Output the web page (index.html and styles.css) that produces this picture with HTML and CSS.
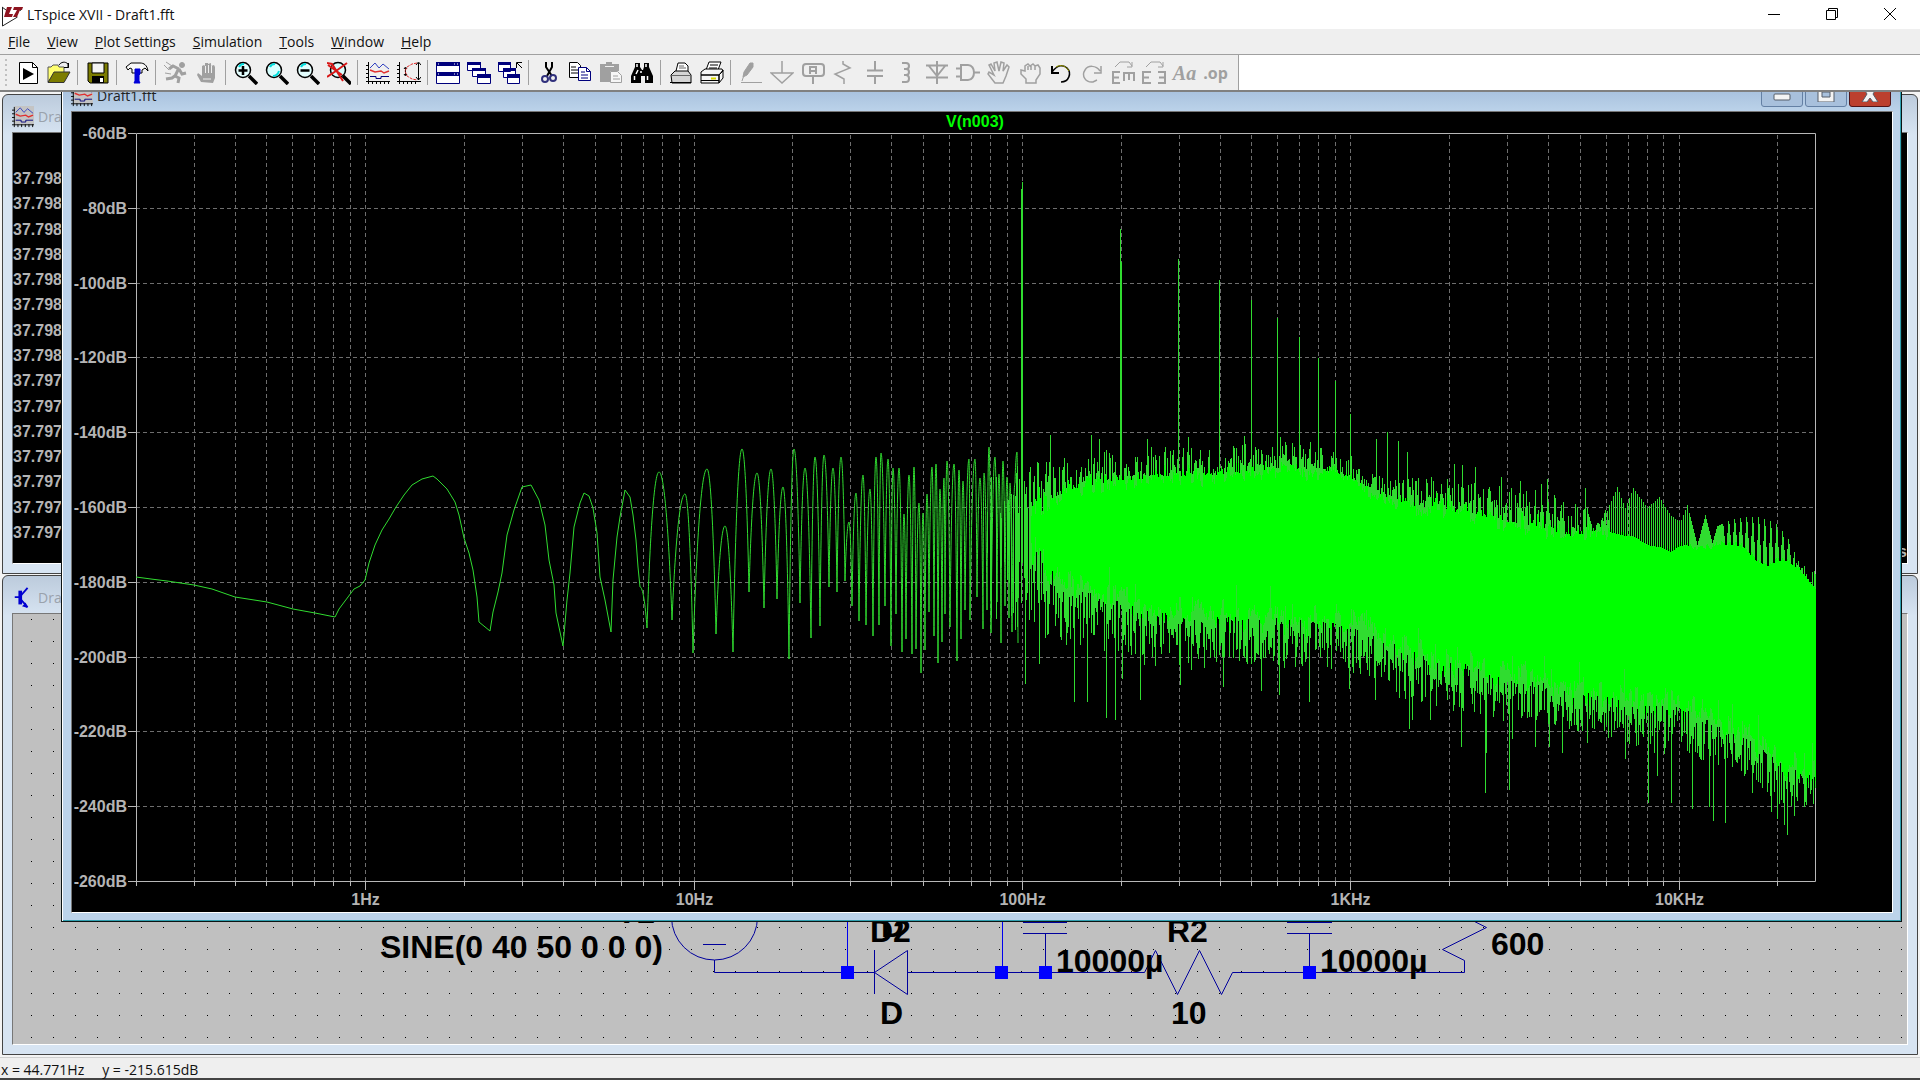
FILE: index.html
```html
<!DOCTYPE html>
<html lang="en">
<head>
    <meta charset="UTF-8">
    <meta name="viewport" content="width=device-width, initial-scale=1.0">
    <title>LTspice XVII - Draft1.fft</title>
    <link rel="stylesheet" href="styles.css">
</head>
<body>

    <!-- Main window title -->
    <header class="titlebar">
        <svg class="logo" viewBox="0 0 22 24">
            <path d="M1.500 4v19l15-9M19 8l2-4" fill="none" stroke="#222" stroke-width="1"/>
            <path d="M1 4l4 3" stroke="#222"/>
            <path d="M6 4h5l-3 7h4l-1 3H3zM13 4h9l-1 3h-2l-3 7h-4l4-7h-4z" fill="#8e1420"/>
        </svg>
        <span class="title">LTspice XVII - Draft1.fft</span>
        <div class="window-buttons">
            <button aria-label="Minimize"><svg viewBox="0 0 12 12"><path d="M0 6.500h12"/></svg></button>
            <button aria-label="Restore"><svg viewBox="0 0 12 12"><path d="M.5 2.500h9v9h-9zM2.500 2.500v-2h9v9h-2"/></svg></button>
            <button aria-label="Close"><svg viewBox="0 0 12 12"><path d="M0 0l12 12M12 0L0 12"/></svg></button>
        </div>
    </header>

    <nav class="menubar">
        <button><u>F</u>ile</button>
        <button><u>V</u>iew</button>
        <button><u>P</u>lot Settings</button>
        <button><u>S</u>imulation</button>
        <button><u>T</u>ools</button>
        <button><u>W</u>indow</button>
        <button><u>H</u>elp</button>
    </nav>

    <div class="toolbar-row">
        <div class="toolbar">
            <span class="grip"></span>
            <button aria-label="Run"><svg viewBox="0 0 24 24"><path d="M3.500 1.500h13l5 5v16h-18z" fill="#fff" stroke="#000"/><path d="M16.500 1.500v5h5" fill="none" stroke="#000"/><path d="M7 7v12l11-6z"/></svg></button>
            <button aria-label="Open"><svg viewBox="0 0 24 24"><path d="M1 21V6h3l2-2h5l1 2h5v6H8z" fill="#ffff70" stroke="#555"/><path d="M1 21.500L7 11h16l-6 10.500z" fill="#7c7c00" stroke="#333"/><path d="M12 4c2-3 6-4 9-1v4M17 6.500h4.500V2" fill="none" stroke="#000"/></svg></button>
            <span class="sep"></span>
            <button aria-label="Save"><svg viewBox="0 0 24 24"><path d="M2 2h20v20H4l-2-2z" fill="#7c7c00" stroke="#000"/><path d="M6 2h12v10H6z" fill="#f4f4f4" stroke="#000"/><path d="M6 15h12v7H6z"/><path d="M14 17h3v4h-3z" fill="#fff"/></svg></button>
            <span class="sep"></span>
            <button aria-label="Control panel"><svg viewBox="0 0 24 24"><path d="M1 6l5-4h9c4 0 7 2 8 8l-3-3-3 2v3H7V8L5 7l-2 2z" fill="#f8f8f8" stroke="#000"/><path d="M10 8h5v5l-1 1v6l1 2H9l1-2v-6z" fill="#0000d8" stroke="#0000d8"/></svg></button>
            <span class="sep"></span>
            <button aria-label="Start simulation"><svg viewBox="0 0 24 24" class="dim"><circle cx="18" cy="4" r="2.500" fill="#a0a0a0"/><path d="M15 7l-4 8 4 2-1 5M12 14l-4 3-6 1M15 8l-6-3-4 3M15 8l3 5 4-1" stroke-width="3"/><path d="M2 1l6 4M0 4l5 5M1 12l6 1"/></svg></button>
            <button aria-label="Halt"><svg viewBox="0 0 24 24"><path d="M6 21l-4-7 1-2 4 3V5l2-1 1 1V2h3v1l3-1v3l3-1 1 2v11l-2 5z" fill="#a0a0a0"/><path d="M10.500 5v7M13.500 4v8M16.500 5v7M8 18h8" stroke="#efefef" fill="none"/></svg></button>
            <span class="sep"></span>
            <button aria-label="Zoom in"><svg viewBox="0 0 24 24"><circle cx="9" cy="9" r="7.500" fill="#e4ffff" stroke="#000" stroke-width="1.500"/><path d="M5 6c1-2 3-3 5-3" stroke="#0dd" fill="none" stroke-width="2"/><path d="M9 5v9M4.500 9.500h9" stroke="#000" stroke-width="2.500"/><path d="M15 15l8 8" stroke="#000" stroke-width="3.500"/></svg></button>
            <button aria-label="Pan"><svg viewBox="0 0 24 24"><circle cx="9" cy="9" r="7.500" fill="#d8ffff" stroke="#000" stroke-width="1.500"/><path d="M5 6c1-2 3-3 5-3M8 15c3 0 5-2 6-5" stroke="#0dd" fill="none" stroke-width="2"/><path d="M15 15l8 8" stroke="#000" stroke-width="3.500"/></svg></button>
            <button aria-label="Zoom out"><svg viewBox="0 0 24 24"><circle cx="9" cy="9" r="7.500" fill="#e4ffff" stroke="#000" stroke-width="1.500"/><path d="M5 6c1-2 3-3 5-3" stroke="#0dd" fill="none" stroke-width="2"/><path d="M4.500 9.500h9" stroke="#000" stroke-width="2.500"/><path d="M15 15l8 8" stroke="#000" stroke-width="3.500"/></svg></button>
            <button aria-label="Zoom to fit"><svg viewBox="0 0 24 24"><circle cx="11" cy="9" r="7.500" fill="#d8ffff" stroke="#000" stroke-width="1.500"/><path d="M16 15l8 8" stroke="#000" stroke-width="3.500"/><path d="M0 2l5 1 11 17M20 2L9 10 0 16M1 4l14 10" stroke="#d81818" stroke-width="2" fill="none"/></svg></button>
            <span class="sep"></span>
            <button aria-label="Autorange"><svg viewBox="0 0 24 24"><g id="chart-icon" fill="none" stroke="#000"><path d="M2.500 1v22M0 20.500h24M0 4.500h3M0 8.500h3M0 12.500h3M0 16.500h3M6.500 20v3M10.500 20v3M14.500 20v3M18.500 20v3M22.500 20v3"/><path d="M4 7l5-5 4 5 4-4 6 5" stroke="#3040c0"/><path d="M4 9l5 2 6-1 3 2 5-2" stroke="#e03030" stroke-width="1.500"/><path d="M4 15.500h6v2h5v-2h8" stroke="#00007c"/></g></svg></button>
            <button aria-label="Plot limits"><svg viewBox="0 0 24 24"><path d="M2.500 1v22M0 20.500h24M0 4.500h3M0 8.500h3M0 12.500h3M0 16.500h3M6.500 20v3M10.500 20v3M14.500 20v3M18.500 20v3M21.500 2v17M19 4l2.500-3L24 4M19 16l2.500 3 2.500-3M8.500 7v7M7 8l1.500-2L10 8M7 13l1.500 2 1.500-2" fill="none" stroke="#000"/><path d="M20 2l-5 1-5 3-2 4 2 5 5 3 5 1" fill="none" stroke="#e03030" stroke-dasharray="3 1"/></svg></button>
            <span class="sep"></span>
            <button aria-label="Tile"><svg viewBox="0 0 24 24"><path d="M.5 1.500h23v21H.5z" fill="#fff" stroke="#00007c"/><path d="M0 1h24v4H0zM0 11h24v4H0z" fill="#00007c"/><path d="M18 3h1M21 3h1M2 3h1M18 13h1M21 13h1M2 13h1" stroke="#fff"/></svg></button>
            <button aria-label="Cascade"><svg viewBox="0 0 24 24"><g fill="#fff" stroke="#00007c"><path d="M.5 1.500h13v8H.5zM5.500 7.500h13v8h-13zM10.500 14.500h13v8h-13z"/></g><path d="M0 1h14v3H0zM5 7h14v3H5zM10 13h14v4H10z" fill="#00007c"/></svg></button>
            <button aria-label="Close all"><svg viewBox="0 0 24 24"><g fill="#fff" stroke="#00007c"><path d="M.5 1.500h12v9H.5zM5.500 8.500h12v8h-12zM9.500 14.500h12v8h-12z"/></g><path d="M0 1h13v3H0zM5 7h13v3H5zM9 13h13v4H9z" fill="#00007c"/><path d="M24 7l-5-5M18.500 7V1.500H24" stroke="#000" fill="none"/></svg></button>
            <span class="sep"></span>
            <button aria-label="Cut"><svg viewBox="0 0 24 24"><path d="M9 1v5l6 9M15 1v5l-5 9" stroke="#000" stroke-width="2" fill="none"/><circle cx="8" cy="18" r="3" fill="none" stroke="#30307c" stroke-width="2"/><circle cx="16" cy="17" r="3" fill="none" stroke="#30307c" stroke-width="2"/></svg></button>
            <button aria-label="Copy"><svg viewBox="0 0 24 24"><path d="M1.500 1.500h8l3 3v12h-11z" fill="#fff" stroke="#000"/><path d="M3 6h5M3 9h7M3 12h7" stroke="#000"/><path d="M10.500 6.500h8l4 4v9h-12z" fill="#fff" stroke="#00007c"/><path d="M18.500 6.500v4h4M13 11h4M13 14h7M13 17h7" stroke="#00007c" fill="none"/></svg></button>
            <button aria-label="Paste"><svg viewBox="0 0 24 24"><path d="M1 3h6V1h6v2h7v7h-9v11H1z" fill="#a0a0a0"/><path d="M11.500 10.500h7l4 4v7h-11z" fill="#f6f6f6" stroke="#a0a0a0"/><path d="M14 15h5M14 18h7" stroke="#a0a0a0"/><path d="M6 5.500h9" stroke="#efefef"/></svg></button>
            <button aria-label="Find"><svg viewBox="0 0 24 24"><path d="M5 2h5v4l2 3h1l1-3V2h5v4l4 9v7h-8v-7h-4v7H1v-7l4-9z"/><path d="M7 3v3M16 3v3M4.500 15v4M17.500 15v4M8 9l-2 4M11 10v2" stroke="#fff" stroke-width="1.500"/></svg></button>
            <span class="sep"></span>
            <button aria-label="Print setup"><svg viewBox="0 0 24 24"><path d="M7 10l2-8h7l3 3v5" fill="#fff" stroke="#000"/><path d="M2 14l4-4h13l3 4v8H3z" fill="#d4d4d4" stroke="#000"/><path d="M3 14.500h18M10 5h5M10 7h7" stroke="#666"/><path d="M1 21.500h21" stroke="#000"/></svg></button>
            <button aria-label="Print"><svg viewBox="0 0 24 24"><path d="M6 9l3-8h12l-3 8" fill="#fff" stroke="#000"/><path d="M10 4h8M9 7h8" stroke="#000"/><path d="M1 11l4-3h17l1 2-4 4H1zM1 14h18v8H1zM19 14l4-5v8l-4 5z" fill="#f6f6f6" stroke="#000"/><path d="M11 17.500h5" stroke="#d8d800" stroke-width="2"/><path d="M1 19.500h18" stroke="#000"/></svg></button>
            <span class="sep"></span>
            <button aria-label="Wire"><svg viewBox="0 0 24 24" class="dim"><path d="M4 16l1-5 6-9h3v4L8 14z" fill="#a0a0a0"/><path d="M2 21.500h21M3 20l2-6"/></svg></button>
            <button aria-label="Ground"><svg viewBox="0 0 24 24" class="dim"><path d="M12 0v12M1 12h22L12 22z" stroke-width="1.500"/></svg></button>
            <button aria-label="Label net"><svg viewBox="0 0 24 24" class="dim"><rect x="2" y="3" width="21" height="12" rx="3" stroke-width="2"/><path d="M12 15v8M9 13V6h6v7M9 10h6" stroke-width="2"/></svg></button>
            <button aria-label="Resistor"><svg viewBox="0 0 24 24" class="dim"><path d="M11 0v3l7 4-15 6 9 5v5" stroke-width="1.500"/></svg></button>
            <button aria-label="Capacitor"><svg viewBox="0 0 24 24" class="dim"><path d="M12 0v9M12 15v8M4 9.500h16M4 15h16" stroke-width="2"/></svg></button>
            <button aria-label="Inductor"><svg viewBox="0 0 24 24" class="dim"><path d="M8 2h4c4 0 4 6 0 6h-2 2c4 0 4 6 0 6h-2 2c4 0 4 7 0 7H8" stroke-width="2"/></svg></button>
            <button aria-label="Diode"><svg viewBox="0 0 24 24" class="dim"><path d="M12 0v23M1 4.500h22M4 5l8 10 8-10M1 16.500h22" stroke-width="2"/></svg></button>
            <button aria-label="Component"><svg viewBox="0 0 24 24" class="dim"><path d="M5 4v15h7c4 0 6-4 6-7.500S16 4 12 4zM0 7.500h5M0 15.500h5M18 11.500h6" stroke-width="2"/></svg></button>
            <button aria-label="Move"><svg viewBox="0 0 24 24" class="dim"><path d="M8 22l-7-9 1-2 5 3L2 4l2-1 4 7-1-8 3-1 2 9 2-9 3 1-1 8 4-6 2 2-3 9-3 7z" stroke-width="1.500"/></svg></button>
            <button aria-label="Drag"><svg viewBox="0 0 24 24" class="dim"><path d="M8 22v-4l-5-5V9l4 1V5l3-2 2 2 3-2 2 2 3-1 2 3v6l-4 6v3zM10 5v4M13 5v4M17 5v4" stroke-width="1.500"/></svg></button>
            <button aria-label="Undo"><svg viewBox="0 0 24 24"><path d="M3 11c5-7 11-8 15-4 5 5 2 14-6 14" fill="none" stroke="#000" stroke-width="1.500"/><path d="M7 6c5-3 10-1 13 4" fill="none" stroke="#a0a000"/><path d="M3 5v7h7" stroke="#000" stroke-width="2" fill="none"/></svg></button>
            <button aria-label="Redo"><svg viewBox="0 0 24 24" class="dim"><path d="M20 10C16 4 8 4 5 9c-4 6 1 13 8 12l4-2M21 5v7h-7" stroke-width="1.500"/></svg></button>
            <button aria-label="Rotate"><svg viewBox="0 0 24 24" class="dim"><path d="M9 11H2v11h7M2 16.500h6M12 12h12M13 12v8M18 12v7M23 12v8" stroke-width="2"/><path d="M4 6l5-5h9l3 4M21 1v5h-5"/></svg></button>
            <button aria-label="Mirror"><svg viewBox="0 0 24 24" class="dim"><path d="M9 11H1v11h8M1 16.500h6M16 11h7v11h-7M23 16.500h-6" stroke-width="2"/><path d="M4 6l5-5h9l3 4M21 1v5h-5"/></svg></button>
            <button class="text-tool serif">Aa</button>
            <button class="text-tool">.op</button>
        </div>
    </div>

    <main class="desktop">

        <!-- Waveform window, behind -->
        <section class="child wave">
            <div class="child-title">
                <svg viewBox="0 0 24 24"><rect x="3" width="21" height="20" fill="#c4c4c4"/><use href="#chart-icon"/></svg>
                <span>Draft1</span>
            </div>
            <ul class="child-body readings" id="readings"></ul>
            <span class="unit">s</span>
        </section>

        <!-- Schematic window, behind -->
        <section class="child schematic">
            <div class="child-title">
                <svg viewBox="0 0 24 24"><path d="M9 4v15" fill="none" stroke="#0000d0" stroke-width="4"/><path d="M3 11h7M10 9l7-8M10 14l7 8" fill="none" stroke="#0000d0" stroke-width="2"/><path d="M17 23l-6-2 4-4z" fill="#0000d0"/></svg>
                <span>Draft1</span>
            </div>
            <div class="child-body">
                <svg class="circuit" viewBox="13 614 1894 430" preserveAspectRatio="xMinYMax slice">
                    <defs>
                        <pattern id="dots" x="31" y="619" width="22" height="22" patternUnits="userSpaceOnUse"><rect width="1" height="1"/></pattern>
                    </defs>
                    <rect x="13" y="614" width="1894" height="430" fill="url(#dots)"/>
                    <g class="wires">
                        <circle cx="714.500" cy="917" r="43"/>
                        <path d="M703 944.500h23M714.500 960v12.500h160M874.500 950v44M874.500 972.500l33-22v44zM907.500 972.500h237l11-22 22 44 22-44 22 44 11-22h232v-12l-22-11 44-22-12-6"/>
                        <path d="M1023 933.500h44M1023 922.500h44M1045.500 933v39M1287 933.500h45M1287 922.500h45M1309.500 933v39"/>
                        <path class="bright" d="M847.500 900v72M1002.500 900v72"/>
                    </g>
                    <path class="nodes" d="M841 966h13v13h-13zM995 966h13v13h-13zM1039 966h13v13h-13zM1303 966h13v13h-13z"/>
                    <g class="values">
                        <text x="616" y="923">V2</text>
                        <text x="380" y="958">SINE(0 40 50 0 0 0)</text>
                        <text x="870" y="942">D2</text>
                        <text x="881" y="937">D</text>
                        <text x="880" y="1024">D</text>
                        <text x="1056" y="972">10000µ</text>
                        <text x="1167" y="942">R2</text>
                        <text x="1171" y="1024">10</text>
                        <text x="1320" y="972">10000µ</text>
                        <text x="1491" y="955">600</text>
                    </g>
                </svg>
            </div>
        </section>

        <!-- FFT window -->
        <section class="child fft">
            <div class="child-title">
                <svg viewBox="0 0 24 24"><rect x="3" width="21" height="20" fill="#c4c4c4"/><use href="#chart-icon"/></svg>
                <span>Draft1.fft</span>
                <div class="caption-buttons">
                    <button aria-label="Minimize plot"><svg viewBox="0 0 20 16"><rect x="2" y="8" width="16" height="6" rx="1"/></svg></button>
                    <button aria-label="Maximize plot"><svg viewBox="0 0 20 16"><path fill-rule="evenodd" d="M2 1h16v15H2zM6 6h8v5H6z"/></svg></button>
                    <button class="close" aria-label="Close plot"><svg viewBox="0 0 20 16"><path d="M2 0h5l3 4 3-4h5l-5 8 5 8h-5l-3-4-3 4H2l5-8z"/></svg></button>
                </div>
            </div>
            <div class="child-body">
                <svg class="plot" id="plot" viewBox="72 112 1820 800">
                    <g id="grid"></g>
                    <g id="trace"></g>
                    <text class="trace-name" x="975" y="127" text-anchor="middle">V(n003)</text>
                </svg>
            </div>
        </section>
    </main>

    <footer class="statusbar">
        <span>x = 44.771Hz</span>
        <span>y = -215.615dB</span>
    </footer>

    <script src="plot.js"></script>
</body>
</html>
```

FILE: styles.css
```css
/* General */
* {
    box-sizing: border-box;
}

body {
    margin: 0;
    height: 100vh;
    display: flex;
    flex-direction: column;
    overflow: hidden;
    background: #fff;
    color: #111;
    font-family: 'Open Sans', 'Noto Sans', sans-serif;
    font-size: 14px;
}

button {
    border: none;
    background: none;
    padding: 0;
    margin: 0;
    font: inherit;
    color: inherit;
}

/* Title bar */
.titlebar {
    display: flex;
    align-items: center;
    height: 29px;
    padding-left: 1px;
}

.logo {
    width: 22px;
    height: 24px;
    margin-right: 4px;
}

.window-buttons {
    display: flex;
    margin-left: auto;
    margin-right: 1px;
}

.window-buttons button {
    width: 58px;
    height: 28px;
}

.window-buttons svg {
    width: 12px;
    height: 12px;
    fill: none;
    stroke: #000;
}

/* Menu */
.menubar {
    display: flex;
    gap: 17px;
    height: 26px;
    padding: 0 8px;
    background: #efefef;
    border-bottom: 1px solid #a0a0a0;
}

/* Toolbar */
.toolbar-row {
    height: 37px;
    border-bottom: 2px solid #808080;
}

.toolbar {
    display: flex;
    align-items: center;
    width: 1239px;
    height: 35px;
    background: #efefef;
    border-right: 1px solid #a0a0a0;
}

.grip {
    width: 2px;
    height: 28px;
    margin: 0 5px;
    background: repeating-linear-gradient(#c0c0c0 0 2px, #efefef 2px 5px);
}

.toolbar button {
    flex: none;
    width: 31px;
    height: 30px;
    line-height: 0;
}

.toolbar svg {
    width: 24px;
    height: 24px;
}

.toolbar .dim {
    fill: none;
    stroke: #a0a0a0;
    stroke-width: 1;
}

.sep {
    flex: none;
    width: 1px;
    height: 25px;
    margin: 0 4px 0 3px;
    background: #a0a0a0;
}

.toolbar .text-tool {
    line-height: 24px;
    font-size: 16px;
    font-weight: bold;
    color: #a0a0a0;
}

.toolbar .serif {
    font-family: 'Liberation Serif', serif;
    font-style: italic;
    font-size: 20px;
}

/* MDI area */
.desktop {
    position: relative;
    flex: 1;
    overflow: hidden;
    background: #f4f4f4;
}

.child {
    position: absolute;
    display: flex;
    flex-direction: column;
    padding: 0 9px 9px;
    background: #d7e4f2;
    border: 1px solid #444;
    border-radius: 6px 6px 0 0;
}

.child-title {
    display: flex;
    align-items: center;
    gap: 4px;
    height: 37px;
    padding-top: 6px;
    color: #9aa2ac;
}

.child-title > svg {
    width: 22px;
    height: 22px;
}

.child-body {
    flex: 1;
    min-height: 0;
    margin: 0;
    border: 1px solid #fff;
    border-top-color: #777;
    border-left-color: #777;
}

.wave {
    top: 2px;
    left: 2px;
    right: 2px;
    height: 480px;
    background: linear-gradient(#bccbdc, #d7e4f2 40px);
}

.schematic {
    top: 483px;
    left: 2px;
    right: 2px;
    bottom: 2px;
    background: linear-gradient(#bccbdc, #d7e4f2 40px);
}

.schematic .child-body {
    background: #c0c0c0;
}

.readings {
    display: flex;
    flex-direction: column;
    justify-content: space-between;
    padding: 33px 0 18px;
    list-style: none;
    background: #000;
    color: #b4b4b4;
    font: bold 16px/25px 'Liberation Sans', Arial, sans-serif;
}

.unit {
    position: absolute;
    right: 10px;
    bottom: 12px;
    color: #b4b4b4;
    font: bold 16px 'Liberation Sans', Arial, sans-serif;
}

.fft {
    top: -13px;
    left: 61px;
    right: 18px;
    height: 843px;
    padding: 0 8px 8px 9px;
    background: linear-gradient(#9fb9d8, #bcd3ea 32px);
    border-color: #0c1414;
    box-shadow: inset 1px 0 #fff, inset -1px -1px #30a0b0;
    border-radius: 0;
}

.fft .child-title {
    height: 31px;
    padding-top: 0;
    color: #222;
}

.fft .child-body {
    background: #000;
}

.caption-buttons {
    display: flex;
    gap: 2px;
    margin-left: auto;
    margin-right: 2px;
}

.caption-buttons button {
    width: 42px;
    height: 23px;
    background: #a8c0dc;
    border: 1px solid #6480a4;
    border-radius: 3px;
}

.caption-buttons .close {
    background: #bc402e;
    border-color: #501418;
}

.caption-buttons svg {
    display: block;
    width: 20px;
    height: 16px;
    margin: 0 auto 4px;
    fill: #f4f4f4;
    stroke: #555c68;
}

/* Schematic drawing */
.circuit,
.plot {
    display: block;
    width: 100%;
    height: 100%;
}

.wires {
    fill: none;
    stroke: #00009c;
}

.bright {
    stroke: #0000ee;
}

.nodes {
    fill: #0000ff;
}

.values {
    font: bold 32px 'Liberation Sans', Arial, sans-serif;
}

/* Plot */
.plot text {
    font: bold 16px 'Liberation Sans', Arial, sans-serif;
    fill: #b4b4b4;
}

.plot .trace-name {
    fill: #00ff00;
}

.plot path {
    fill: none;
    stroke-width: 1;
}

.axis {
    stroke: #b8b8b8;
}

.dashes {
    stroke: #6e6e6e;
    stroke-dasharray: 4 3;
}

.thin {
    stroke: #30dc30;
}

.solid {
    stroke: #00ff00;
}

/* Status bar */
.statusbar {
    display: flex;
    gap: 18px;
    height: 23px;
    padding: 2px 1px 0;
    line-height: 20px;
    background: linear-gradient(#444, #444) bottom / 100% 2px no-repeat #efefef;
    border-top: 1px solid #d0d0d0;
}
```

FILE: plot.js
```javascript
// Axis geometry
const left = 136, right = 1815, top0 = 133, bottom0 = 881;
const hz = f => Math.round(365.3 + 328.3 * Math.log10(f)) + 0.5;
const db = v => Math.round(top0 + (-60 - v) * 3.74) + 0.5;

// Peaks and valleys of the slow part of the curve
const slow = [[136,577],[151,579],[167,581],[194,585],[212,589],[235,597],[267,602],[293,609],[315,613],[335,617],
    [339,609],[345,601],[354,589],[360,586],[365,580],[369,563],[375,545],[382,530],[389,519],[396,507],[404,495],
    [412,485],[422,479],[433,476],[437,479],[447,489],[455,502],[459,515],[464,538],[469,553],[473,570],[477,597],
    [479,622],[490,631],[493,612],[498,592],[502,573],[507,535],[514,510],[522,487],[531,485],[539,500],[545,525],
    [549,560],[554,585],[556,613],[563,646],[567,600],[570,573],[574,527],[580,503],[584,493],[589,496],[593,508],
    [597,533],[600,577],[605,600],[611,632],[613,580],[617,537],[620,517],[625,490],[630,497],[633,515],[636,540],
    [638,567],[640,587]];

const swings = [[647,628],[659,472],[672,620],[685,494],[693,653],[707,469],[716,634],[725,526],[733,652],[742,449],
    [749,592],[757,473],[764,608],[771,469],[777,599],[783,487],[789,659],[794,449],[800,603],[805,468],[811,638],
    [815,457],[820,626],[824,455],[829,587],[833,468],[837,592],[841,457],[845,581],[849,522],[852,606],[856,493],
    [859,621],[863,475],[866,625],[870,489],[873,636],[876,457],[879,625],[881,453],[885,606],[888,459],[891,646],
    [893,468],[896,614],[899,468],[902,652],[904,514],[906,639],[909,475],[912,654],[914,467],[916,649],[919,503],
    [921,673],[923,513],[925,650],[927,494],[929,612],[932,467],[934,636],[936,464],[938,663],[940,489],[942,642],
    [944,478],[945,614],[947,461],[950,627],[954,464],[957,661],[959,470],[961,639],[963,481],[965,610],[969,459],
    [970,620],[975,459],[977,597],[980,478],[983,629],[984,473],[987,610],[989,447],[991,633],[995,457],[997,602],
    [999,474],[1001,643],[1003,461],[1005,606],[1007,477],[1009,618],[1010,483],[1012,632],[1015,483],[1017,452],
    [1018,643]];

// Envelopes of the dense part: [x, tip top, solid top, solid bottom, tip bottom]
const bands = [[985,475,520,550,615],[1030,462,505,575,640],[1060,458,490,590,646],[1100,450,480,604,650],
    [1150,446,474,618,667],[1200,448,472,623,671],[1250,443,468,626,664],[1283,441,464,626,668],[1333,450,468,630,671],
    [1350,455,475,632,678],[1370,473,485,642,685],[1400,480,500,654,700],[1440,474,506,670,712],[1473,482,510,672,712],
    [1506,487,518,686,723],[1540,487,523,690,723],[1573,502,533,699,733],[1600,512,525,703,737],[1609,505,528,706,740],
    [1617,487,530,706,742],[1625,508,532,707,745],[1633,488,532,707,748],[1647,508,541,709,752],[1659,497,543,711,758],
    [1670,515,548,714,767],[1680,522,542,716,764],[1687,505,541,719,762],[1697,545,546,722,762],[1705,515,544,726,763],
    [1712,543,544,729,765],[1717,526,541,732,766],[1730,520,541,740,772],[1743,517,543,744,775],[1757,517,558,752,785],
    [1768,520,562,760,798],[1777,525,557,768,805],[1787,537,557,776,808],[1800,565,567,780,812],[1815,568,585,784,810]];

const up = {1021:189,1022:182,1050:435,1091:435,1099:439,1120:229,1121:262,1147:439,1178:259,1188:437,1219:280,1244:436,
    1251:300,1277:318,1280:437,1299:337,1310:442,1318:358,1335:381,1350:414,1376:439,1387:432,1398:441,1407:452,
    1454:464,1462:465,1475:467,1501:477,1520:481,1541:484,1547:479,1585:488};

const down = {1025:684,1039:664,1074:702,1087:702,1106:718,1115:720,1122:679,1140:700,1180:685,1223:687,1261:691,
    1279:695,1309:702,1349:689,1375:700,1409:729,1412:720,1430:720,1461:747,1485:793,1486:753,1509:790,1512:739,
    1535:747,1549:747,1562:753,1587:743,1625:759,1648:803,1657:776,1671:803,1692:809,1709:807,1713:821,1725:823,
    1752:793,1771:812,1777:819,1784:825,1787:835,1794:816};

let seed = 11;
function rand() {
    seed = (seed * 16807) % 2147483647;
    return seed / 2147483647;
}

function band(x) {
    let i = 1;
    while (i < bands.length - 1 && bands[i][0] < x) i++;
    const a = bands[i - 1], b = bands[i];
    const t = (x - a[0]) / (b[0] - a[0]);
    return a.map((v, k) => v + (b[k] - v) * t);
}

function drawGrid() {
    let dashes = '', axis = `M${left}.5 ${top0}.5H${right}.5V${bottom0}.5H${left}.5Z`, labels = '';
    for (let v = -60; v >= -260; v -= 20) {
        const y = db(v);
        axis += `M${left - 8} ${y}h8`;
        if (v < -60 && v > -260) dashes += `M${left} ${y}H${right}`;
        labels += `<text x="127" y="${y + 5.5}" text-anchor="end">${v}dB</text>`;
    }
    for (let d = -1; d < 5; d++) {
        for (let n = 1; n < 10; n++) {
            const f = n * 10 ** d;
            if (f < 0.19 || f > 25000) continue;
            const x = hz(f);
            if (f > 0.25) dashes += `M${x} ${top0 + 2}V${bottom0}`;
            axis += `M${x} ${bottom0}v${n === 1 ? 9 : 5}`;
        }
    }
    ['1Hz', '10Hz', '100Hz', '1KHz', '10KHz'].forEach((t, i) => {
        labels += `<text x="${hz(10 ** i)}" y="905" text-anchor="middle">${t}</text>`;
    });
    document.getElementById('grid').innerHTML =
        `<path class="dashes" d="${dashes}"/><path class="axis" d="${axis}"/>${labels}`;
}

function drawTrace() {
    let line = 'M' + slow.map(p => p.join(' ')).join('L');
    let [px, py] = slow[slow.length - 1];
    // Round at the peaks, sharp at the valleys
    swings.forEach(([x, y]) => {
        const dx = x - px, dy = y - py;
        if (dy < 0) line += `C${px + dx * 0.25} ${py + dy * 0.6} ${px + dx * 0.6} ${y} ${x} ${y}`;
        else line += `C${px + dx * 0.4} ${py} ${px + dx * 0.75} ${py + dy * 0.4} ${x} ${y}`;
        px = x;
        py = y;
    });

    let tips = '', solid = '', wobble = 0, dip = 0;
    for (let x = 985; x <= right; x++) {
        const [, tipTop, solidTop, solidBottom, tipBottom] = band(x);
        const noisy = x < 1608;
        if (x % 3 === 0) {
            wobble = rand();
            dip = rand();
        }
        let reach = rand() ** 1.5;
        if (x > 1608 && x < 1690) reach = x % 2;
        else if (x >= 1690 && x < 1722) reach = 1;
        else if (x >= 1722 && x < 1795) reach = [1, 0.85, 0.4, 0, 0, 0.5][x % 6];
        const fade = x < 1060 ? rand() * (1060 - x) * 0.7 : 0;
        const a = up[x] || solidTop + 4 - (solidTop - tipTop + 4) * reach;
        const b = down[x] || solidBottom - 8 + (tipBottom - solidBottom + 8) * rand() ** 1.3;
        if (x > 1060 || rand() > (1060 - x) / 110 || up[x] || down[x]) tips += `M${x}.5 ${a.toFixed()}V${b.toFixed()}`;

        // Uneven edge of the filled area, with a deep notch now and then
        const notch = rand() > 0.96 ? 22 : 0;
        const s = solidTop + fade + (noisy ? 8 - wobble * (solidTop - tipTop) * 0.7 + rand() * 8 : rand() * 5);
        const e = solidBottom - fade - 16 + dip * 26 - rand() * 12 - notch;
        if (x > 1030 && e > s) solid += `M${x}.5 ${Math.max(s, a).toFixed()}V${Math.min(e, b).toFixed()}`;
    }
    document.getElementById('trace').innerHTML =
        `<path class="thin" d="${line}"/><path class="thin" shape-rendering="crispEdges" d="${tips}"/>` +
        `<path class="solid" shape-rendering="crispEdges" d="${solid}"/>`;
}

// Left scale of the waveform window
for (let i = 0; i < 15; i++) {
    const li = document.createElement('li');
    li.textContent = i < 8 ? '37.798' : '37.797';
    document.getElementById('readings').appendChild(li);
}

drawGrid();
drawTrace();
```
